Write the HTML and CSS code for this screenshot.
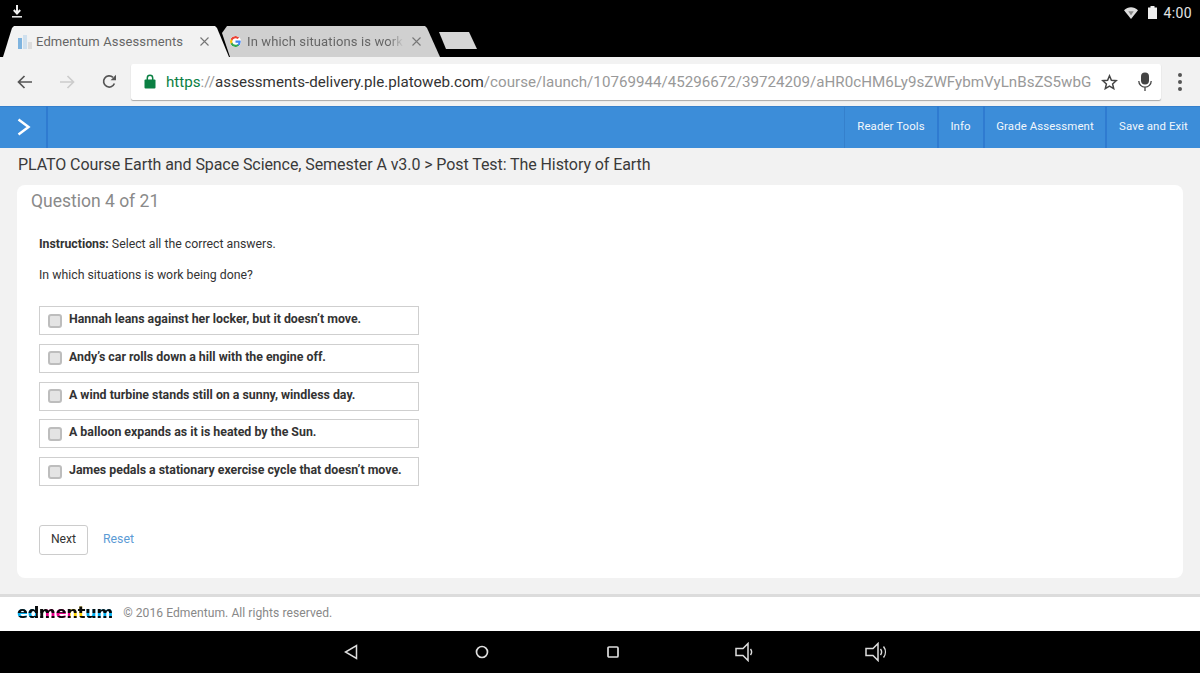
FILE: index.html
```html
<!DOCTYPE html>
<html lang="en">
<head>
<meta charset="utf-8">
<title>Edmentum Assessments</title>
<link rel="stylesheet" href="styles.css">
</head>
<body>
<div class="screen">
  <header class="chrome-top">
    <div class="status">
      <svg class="dl" width="10" height="13" viewBox="0 0 10 13"><path d="M5 0v8M1.800 5 5 8.500 8.200 5" fill="none" stroke="#eee" stroke-width="2"/><path d="M0 11.800h10" stroke="#eee" stroke-width="1.500"/></svg>
      <div class="status-right">
        <svg class="wifi" width="14" height="12" viewBox="0 0 14 12"><path d="M0 3.200C4-.8 10-.8 14 3.200L7 12z" fill="#ddd"/><path d="M4.300 4.200h5.400L7 8.600z" fill="#888"/></svg>
        <svg width="9" height="13" viewBox="0 0 9 13"><path d="M2.500 0h4v1.500H9V13H0V1.500h2.500z" fill="#eee"/></svg>
        <span class="clock">4:00</span>
      </div>
    </div>
    <div class="tabs">
      <div class="tab tab-active">
        <svg class="favicon" width="14" height="14" viewBox="0 0 14 14"><rect x="0" y="3" width="4" height="11" fill="#7fb4df"/><rect x="5" y="0" width="4" height="14" fill="#cfe0ee"/><rect x="10" y="7" width="4" height="7" fill="#dcdcdc"/></svg>
        <span class="tab-title">Edmentum Assessments</span>
        <svg class="tab-x" width="9" height="9" viewBox="0 0 9 9"><path d="M.5.5l8 8M8.500.5l-8 8" stroke="#777" stroke-width="1.100"/></svg>
      </div>
      <div class="tab tab-other">
        <svg class="favicon-g" width="11" height="11" viewBox="0 0 24 24"><path d="M23.500 12.300c0-.8-.1-1.600-.2-2.300H12v4.500h6.500c-.3 1.500-1.100 2.700-2.400 3.600v3h3.800c2.300-2.100 3.600-5.200 3.600-8.800z" fill="#4285f4"/><path d="M12 24c3.200 0 6-1.100 7.900-2.900l-3.800-3c-1.100.7-2.400 1.200-4.100 1.200-3.100 0-5.800-2.100-6.700-5H1.300v3.100C3.300 21.300 7.300 24 12 24z" fill="#34a853"/><path d="M5.300 14.300c-.5-1.500-.5-3.100 0-4.600V6.600H1.300c-1.700 3.300-1.700 7.500 0 10.800z" fill="#fbbc05"/><path d="M12 4.700c1.800 0 3.300.6 4.600 1.800l3.400-3.400C17.900 1.200 15.200 0 12 0 7.300 0 3.300 2.700 1.300 6.600l4 3.100c.9-2.900 3.600-5 6.700-5z" fill="#ea4335"/></svg>
        <span class="tab-title">In which situations is work</span>
        <svg class="tab-x" width="9" height="9" viewBox="0 0 9 9"><path d="M.5.5l8 8M8.500.5l-8 8" stroke="#777" stroke-width="1.100"/></svg>
      </div>
      <div class="tab-new"></div>
    </div>
  </header>

  <div class="toolbar">
    <svg class="tool-icon" width="16" height="14" viewBox="0 0 16 14"><path d="M15 7H2M7.500 1 1.500 7l6 6" fill="none" stroke="#555" stroke-width="1.700"/></svg>
    <svg class="tool-icon fwd" width="16" height="14" viewBox="0 0 16 14"><path d="M1 7h13M8.500 1l6 6-6 6" fill="none" stroke="#ccc" stroke-width="1.700"/></svg>
    <svg class="tool-icon reload" width="15" height="15" viewBox="0 0 15 15"><path d="M12.400 9.500A5.600 5.600 0 1 1 11 3.300" fill="none" stroke="#555" stroke-width="1.700"/><path d="M14 .8v5.400H8.600z" fill="#555"/></svg>
    <div class="omnibox">
      <svg class="lock" width="12" height="15" viewBox="0 0 12 15"><path d="M3.300 6V4a2.700 2.700 0 0 1 5.400 0v2" fill="none" stroke="#0b8043" stroke-width="1.500"/><rect x=".5" y="5.500" width="11" height="9" rx="1" fill="#0b8043"/></svg>
      <span class="url"><span class="url-https">https</span><span class="url-dim">://</span><span class="url-host">assessments-delivery.ple.platoweb.com</span><span class="url-dim">/course/launch/10769944/45296672/39724209/aHR0cHM6Ly9sZWFybmVyLnBsZS5wbG</span></span>
      <svg class="star" width="17" height="16" viewBox="0 0 17 16"><path d="M8.500 1.800 10.400 6.300l4.800.4-3.600 3.200 1.100 4.700-4.200-2.500-4.200 2.500 1.100-4.700L1.800 6.700l4.800-.4z" fill="none" stroke="#444" stroke-width="1.500"/></svg>
      <svg class="mic" width="14" height="19" viewBox="0 0 14 19"><rect x="3" y=".5" width="8" height="12" rx="4" fill="#444"/><path d="M.8 9a6.200 6.200 0 0 0 12.400 0M7 15v4" fill="none" stroke="#444" stroke-width="1.300"/></svg>
    </div>
    <div class="menu-dots"><i></i><i></i><i></i></div>
  </div>

  <nav class="bluebar">
    <div class="toggle">
      <svg width="14" height="18" viewBox="0 0 14 18"><path d="M1.500 1.500 11.500 9l-10 7.500" fill="none" stroke="#fff" stroke-width="2.500"/></svg>
    </div>
    <div class="nav-spacer"></div>
    <a class="nav-item nav-reader">Reader Tools</a>
    <a class="nav-item nav-info">Info</a>
    <a class="nav-item nav-grade">Grade Assessment</a>
    <a class="nav-item nav-save">Save and Exit</a>
  </nav>

  <main class="page">
    <h1 class="crumb">PLATO Course Earth and Space Science, Semester A v3.0 &gt; Post Test: The History of Earth</h1>
    <section class="card">
      <h2 class="q-count">Question 4 of 21</h2>
      <p class="instr"><b>Instructions:</b> Select all the correct answers.</p>
      <p class="prompt">In which situations is work being done?</p>
      <ul class="answers">
        <li class="answer"><span class="cb"></span><span class="answer-text">Hannah leans against her locker, but it doesn’t move.</span></li>
        <li class="answer"><span class="cb"></span><span class="answer-text">Andy’s car rolls down a hill with the engine off.</span></li>
        <li class="answer"><span class="cb"></span><span class="answer-text">A wind turbine stands still on a sunny, windless day.</span></li>
        <li class="answer"><span class="cb"></span><span class="answer-text">A balloon expands as it is heated by the Sun.</span></li>
        <li class="answer"><span class="cb"></span><span class="answer-text">James pedals a stationary exercise cycle that doesn’t move.</span></li>
      </ul>
      <div class="actions">
        <button class="next">Next</button>
        <a class="reset">Reset</a>
      </div>
    </section>
  </main>

  <footer class="foot">
    <span class="logo">edmentum</span>
    <span class="copy">© 2016 Edmentum. All rights reserved.</span>
  </footer>

  <div class="navkeys">
    <svg width="14" height="16" viewBox="0 0 14 16"><path d="M12.500 1.500v13L1.500 8z" fill="none" stroke="#ddd" stroke-width="1.500"/></svg>
    <svg width="14" height="14" viewBox="0 0 14 14"><circle cx="7" cy="7" r="5.500" fill="none" stroke="#ddd" stroke-width="1.700"/></svg>
    <svg width="12" height="12" viewBox="0 0 12 12"><rect x="1" y="1" width="10" height="10" rx="1" fill="none" stroke="#ddd" stroke-width="1.700"/></svg>
    <svg width="20" height="20" viewBox="0 0 20 20"><path d="M1 6.500h7L13 1.500v17l-5-5H1z" fill="none" stroke="#ddd" stroke-width="1.500"/><path d="M15.500 7a5 5 0 0 1 0 6" fill="none" stroke="#ddd" stroke-width="1.400"/></svg>
    <svg width="24" height="20" viewBox="0 0 24 20"><path d="M1 6.500h7L13 1.500v17l-5-5H1z" fill="none" stroke="#ddd" stroke-width="1.500"/><path d="M15.500 7a5 5 0 0 1 0 6M18.500 4.500a9 9 0 0 1 0 11" fill="none" stroke="#ddd" stroke-width="1.400"/></svg>
  </div>
</div>
</body>
</html>
```
FILE: styles.css
```css
* { box-sizing: border-box; }
html, body { margin: 0; padding: 0; height: 100%; overflow: hidden; }
body { font-family: Roboto, "Liberation Sans", sans-serif; color: #333; background: #f2f2f2; }
.screen { width: 1200px; height: 673px; display: flex; flex-direction: column; overflow: hidden; }

.chrome-top { height: 57px; background: #000; display: flex; flex-direction: column; flex: none; }
.status { height: 26px; display: flex; align-items: flex-start; justify-content: space-between; padding: 4px 8px 0 12px; }
.dl { margin-top: 1px; }
.status-right { display: flex; align-items: center; gap: 10px; height: 15px; margin-top: 1px; }
.wifi { margin-top: 1px; }
.clock { color: #e4e4e4; font-size: 14px; letter-spacing: .4px; margin-left: -4px; }

.tabs { height: 31px; display: flex; align-items: flex-end; padding-left: 3px; }
.tab { height: 31px; display: flex; align-items: center; font-size: 13px; color: #666; flex: none; }
.tab-active { width: 226px; background: #f2f2f2; padding: 0 0 0 15px; clip-path: polygon(0 100%, 9px 2px, 11px 0, 212px 0, 214px 2px, 226px 100%); }
.tab-other { width: 218px; margin-left: -7px; background: #d0d0d0; padding: 0 0 0 8px; clip-path: polygon(8px 100%, 0 7px, 5px 0, 203px 0, 205px 2px, 218px 100%); }
.favicon { margin-right: 4px; flex: none; }
.favicon-g { margin-right: 6px; background: #fff; border-radius: 50%; flex: none; }
.tab-title { white-space: nowrap; overflow: hidden; letter-spacing: .12px; }
.tab-active .tab-title { width: 150px; }
.tab-other .tab-title { width: 157px; -webkit-mask-image: linear-gradient(90deg, #000 90%, transparent); mask-image: linear-gradient(90deg, #000 90%, transparent); }
.tab-x { flex: none; }
.tab-active .tab-x { margin-left: 14px; }
.tab-other .tab-x { margin-left: 8px; }
.tab-new { width: 38px; height: 17px; margin: 0 0 8px -1px; background: #d6d6d6; clip-path: polygon(0 0, 30px 0, 38px 100%, 7px 100%); }

.toolbar { height: 49px; background: #f2f2f2; display: flex; align-items: center; flex: none; padding-left: 17px; }
.fwd { margin-left: 26px; }
.reload { margin-left: 27px; }
.tool-icon { flex: none; }
.omnibox { width: 1030px; height: 36px; margin-left: 14px; background: #fff; border-radius: 2px; box-shadow: 0 1px 1px rgba(0,0,0,.3); display: flex; align-items: center; padding-left: 13px; flex: none; }
.lock { flex: none; margin-top: -1px; }
.url { width: 925px; margin-left: 10px; font-size: 15.150px; white-space: nowrap; color: #333; flex: none; }
.url-https { color: #0b8043; }
.url-dim { color: #999; }
.star { margin-left: 10px; flex: none; }
.mic { margin-left: 20px; flex: none; }
.menu-dots { margin-left: 17px; display: flex; flex-direction: column; gap: 3px; }
.menu-dots i { width: 4px; height: 4px; border-radius: 50%; background: #555; display: block; }

.bluebar { height: 42px; background: #3c8dd9; display: flex; flex: none; color: #fff; box-shadow: inset 0 1px 0 #3580cc; }
.toggle { width: 48px; border-right: 2px solid #2f7bd0; display: flex; align-items: center; justify-content: center; padding-left: 2px; }
.nav-spacer { flex: 1; }
.nav-item { display: flex; align-items: center; justify-content: center; padding-bottom: 3px; font-size: 11.400px; letter-spacing: .1px; border-left: 2px solid #2f7bd0; color: #f2f7fc; }
.nav-reader { width: 93px; border-left-width: 1px; border-color: #3580cc; }
.nav-info { width: 46px; padding-right: 1px; }
.nav-grade { width: 122px; }
.nav-save { width: 95px; }

.page { flex: 1; padding: 0 17px; background: #f2f2f2; min-height: 0; }
.crumb { margin: 0; height: 37px; padding: 7px 0 0 1px; font-size: 16px; font-weight: 400; line-height: 19px; letter-spacing: -.08px; color: #3a3a3a; }
.card { height: 393px; background: #fff; border-radius: 8px; padding: 6px 14px 0 14px; }
.q-count { margin: 0; font-size: 17.500px; font-weight: 400; line-height: 21px; color: #8a8a8a; }
.instr { margin: 24px 0 0 8px; font-size: 12.300px; line-height: 16px; color: #333; }
.instr b { font-weight: 700; }
.prompt { margin: 15px 0 0 8px; font-size: 12.300px; line-height: 16px; color: #333; }
.answers { list-style: none; margin: 23px 0 0 8px; padding: 0; display: flex; flex-direction: column; gap: 8.750px; }
.answer { width: 380px; height: 29px; border: 1px solid #cfcfcf; background: #fff; display: flex; align-items: center; font-size: 12.350px; font-weight: 700; color: #333; padding-left: 8px; white-space: nowrap; }
.answer-text { margin-top: -3px; }
.cb { width: 14px; height: 14px; border: 2px solid #bdbdbd; border-radius: 3px; background: #e4e4e4; margin: 0 7px 0 0; flex: none; }
.actions { display: flex; align-items: center; margin: 39px 0 0 8px; }
.next { width: 49px; height: 30px; background: #fff; border: 1px solid #ccc; border-radius: 3px; font: 12.200px Roboto, sans-serif; color: #333; padding: 0 0 3px; }
.reset { margin: 0 0 3px 15px; font-size: 12.300px; color: #5b9bd5; }

.foot { height: 37px; flex: none; background: #fff; border-top: 3px solid #dcdcdc; display: flex; align-items: center; padding: 0 0 0 17px; }
.logo { font-family: "DejaVu Sans", sans-serif; font-weight: 700; font-size: 16px; letter-spacing: -.1px; line-height: 16px; margin-top: -3px;
  background: linear-gradient(#0a0a0a 0 50%, transparent 50% 68%, #0a0a0a 68%), linear-gradient(90deg, #00aeef 0 20%, #111 20% 30%, #ec008c 30% 55%, #ffd400 55% 72%, #00aeef 72% 100%);
  -webkit-background-clip: text; background-clip: text; color: transparent; }
.copy { margin-left: 10px; font-size: 12.100px; color: #888; margin-top: -3px; letter-spacing: .05px; }

.navkeys { height: 42px; flex: none; background: #000; display: flex; align-items: center; padding-left: 344px; }
.navkeys svg:nth-child(2) { margin-left: 117px; }
.navkeys svg:nth-child(3) { margin-left: 118px; }
.navkeys svg:nth-child(4) { margin-left: 116px; }
.navkeys svg:nth-child(5) { margin-left: 110px; }
```
